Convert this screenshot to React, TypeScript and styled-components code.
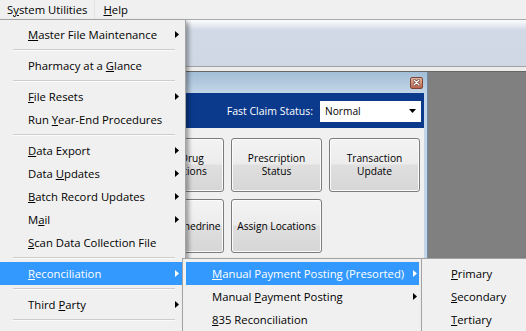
import React from "react";
import styled, { createGlobalStyle } from "styled-components";

const GlobalStyle = createGlobalStyle`
  * { box-sizing: border-box; }
  html, body { margin: 0; padding: 0; background: #f0f0f0; }
`;

const Page = styled.div`
  position: relative;
  width: 526px;
  height: 331px;
  overflow: hidden;
  background: #f0f0f0;
  font-family: "Open Sans", "Noto Sans", sans-serif;
  display: flex;
  flex-direction: column;
  color: #000;
`;

const MenuBar = styled.div`
  height: 19px;
  display: flex;
  align-items: stretch;
  font-size: 11.3px;
  line-height: 19px;
  background: #f0f0f0;
`;

const TopItem = styled.div<{ $open?: boolean }>`
  padding: 0 7px 0 ${(p) => (p.$open ? 7 : 8)}px;
  border-right: 1px solid ${(p) => (p.$open ? "#e2e2e2" : "transparent")};
  white-space: nowrap;
`;

const Toolbar = styled.div`
  height: 48px;
  border-top: 1px solid #a9a9a9;
  border-bottom: 1px solid #a2a2a2;
  background: linear-gradient(
    180deg,
    #fbfcfd 0px,
    #e4e9f0 6px,
    #d1d9e6 10px,
    #cfd7e4 100%
  );
`;

const Strip = styled.div`
  height: 4px;
  background: #ececec;
`;

const MdiArea = styled.div`
  flex: 1;
  display: flex;
  background: #808080;
  border-top: 1px solid #666;
`;

const ChildWindow = styled.div`
  margin-left: 100px;
  width: 328px;
  display: flex;
  flex-direction: column;
  background: #c3d5e6;
  border-right: 1px solid #6f8cab;
`;

const TitleBar = styled.div`
  height: 21px;
  display: flex;
  align-items: center;
  justify-content: flex-end;
  padding-right: 4px;
  background: linear-gradient(180deg, #a3bed7 0%, #b2c9de 50%, #c4d6e7 100%);
`;

const CloseBtn = styled.div`
  width: 13px;
  height: 12px;
  border: 1px solid #7a4736;
  border-radius: 2px;
  background: linear-gradient(180deg, #e6b6a6 0%, #cf8a74 50%, #b9634c 100%);
  display: flex;
  align-items: center;
  justify-content: center;
`;

const Body = styled.div`
  flex: 1;
  margin: 0 3px 0 4px;
  display: flex;
  flex-direction: column;
`;

const StatusBand = styled.div`
  height: 35px;
  background: #0b3a8d;
  display: flex;
  align-items: center;
  justify-content: flex-end;
  gap: 7px;
  padding: 1px 3px 0 0;
`;

const BandLabel = styled.span`
  color: #fff;
  font-size: 10.5px;
  white-space: nowrap;
`;

const Select = styled.div`
  width: 101px;
  height: 21px;
  background: #fff;
  display: flex;
  align-items: center;
  justify-content: space-between;
  padding: 0 5px 0 5px;
  font-size: 10.2px;
`;

const Content = styled.div`
  flex: 1;
  background: #f0f0f0;
  padding: 10px 4px 0 0;
  display: grid;
  grid-template-columns: repeat(3, 91px);
  grid-auto-rows: 54px;
  gap: 7px;
  justify-content: end;
  align-content: start;
`;

const ActionButton = styled.div`
  border: 1px solid #7c7c7c;
  border-radius: 3px;
  box-shadow: inset 0 0 0 1px #fbfbfb;
  background: linear-gradient(
    180deg,
    #f3f3f3 0%,
    #ececec 48%,
    #dfdfdf 50%,
    #d6d6d6 100%
  );
  display: flex;
  align-items: center;
  justify-content: center;
  text-align: center;
  font-size: 10.2px;
  line-height: 13px;
  white-space: pre;
  overflow: hidden;
`;

const Menu = styled.div<{ $left: number; $top: number; $width: number }>`
  position: absolute;
  left: ${(p) => p.$left}px;
  top: ${(p) => p.$top}px;
  width: ${(p) => p.$width}px;
  background: #f0f0f0;
  border: 1px solid #a3a3a3;
  padding: 3px 2px 3px 3px;
  box-shadow: 3px 3px 4px rgba(0, 0, 0, 0.33);
  font-size: 11.3px;
`;

const MenuItem = styled.div<{ $active?: boolean; $arrowPad: number }>`
  height: 23px;
  display: flex;
  align-items: center;
  padding: 0 ${(p) => p.$arrowPad}px 0 26px;
  background: ${(p) => (p.$active ? "#3399ff" : "transparent")};
  color: ${(p) => (p.$active ? "#fff" : "#000")};
  white-space: nowrap;
  line-height: 23px;
`;

const MainItem = styled(MenuItem)`
  padding-left: 28px;
`;

const ItemLabel = styled.span`
  flex: 1;
`;

const Separator = styled.div`
  height: 8px;
  padding-top: 3px;
  margin: 0 8px 0 13px;
  &::before {
    content: "";
    display: block;
    height: 1px;
    background: #cdcdcd;
    box-shadow: 0 1px 0 #fbfbfb;
  }
`;

const Arrow = () => (
  <svg width="4" height="7" viewBox="0 0 4 7">
    <path d="M0 0 L4 3.5 L0 7 Z" fill="currentColor" />
  </svg>
);

const DownArrow = () => (
  <svg width="7" height="4" viewBox="0 0 7 4">
    <path d="M0 0 L7 0 L3.5 4 Z" fill="#000" />
  </svg>
);

const CloseGlyph = () => (
  <svg width="7" height="7" viewBox="0 0 7 7">
    <path d="M1 1 L6 6 M6 1 L1 6" stroke="#5a2a1c" strokeWidth="2.6" strokeLinecap="round" />
    <path d="M1 1 L6 6 M6 1 L1 6" stroke="#fff" strokeWidth="1.4" strokeLinecap="round" />
  </svg>
);

type Entry =
  | { sep: true }
  | { label: React.ReactNode; sub?: boolean; active?: boolean };

const mainEntries: Entry[] = [
  { label: <><u>M</u>aster File Maintenance</>, sub: true },
  { sep: true },
  { label: <>Pharmacy at a <u>G</u>lance</> },
  { sep: true },
  { label: <><u>F</u>ile Resets</>, sub: true },
  { label: <>Run <u>Y</u>ear-End Procedures</> },
  { sep: true },
  { label: <><u>D</u>ata Export</>, sub: true },
  { label: <>Data <u>U</u>pdates</>, sub: true },
  { label: <><u>B</u>atch Record Updates</>, sub: true },
  { label: <>M<u>a</u>il</>, sub: true },
  { label: <><u>S</u>can Data Collection File</> },
  { sep: true },
  { label: <><u>R</u>econciliation</>, sub: true, active: true },
  { sep: true },
  { label: <>Third <u>P</u>arty</>, sub: true },
  { sep: true },
  { label: null, sub: true },
];

const reconEntries: Entry[] = [
  { label: <><u>M</u>anual Payment Posting (Presorted)</>, sub: true, active: true },
  { label: <>Manual <u>P</u>ayment Posting</>, sub: true },
  { label: <><u>8</u>35 Reconciliation</> },
];

const presortEntries: Entry[] = [
  { label: <><u>P</u>rimary</> },
  { label: <><u>S</u>econdary</> },
  { label: <><u>T</u>ertiary</> },
];

const buttons = [
  "Multi-Drug\nInteractions",
  "Prescription\nStatus",
  "Transaction\nUpdate",
  "Pseudoephedrine",
  "Assign Locations",
];

export default function App() {
  return (
    <Page>
      <GlobalStyle />
      <MenuBar>
        <TopItem $open>
          S<u>y</u>stem Utilities
        </TopItem>
        <TopItem>
          <u>H</u>elp
        </TopItem>
      </MenuBar>
      <Toolbar />
      <Strip />
      <MdiArea>
        <ChildWindow>
          <TitleBar>
            <CloseBtn>
              <CloseGlyph />
            </CloseBtn>
          </TitleBar>
          <Body>
            <StatusBand>
              <BandLabel>Fast Claim Status:</BandLabel>
              <Select>
                <span>Normal</span>
                <DownArrow />
              </Select>
            </StatusBand>
            <Content>
              {buttons.map((b) => (
                <ActionButton key={b}>{b}</ActionButton>
              ))}
            </Content>
          </Body>
        </ChildWindow>
      </MdiArea>

      <Menu $left={-4} $top={19} $width={190}>
        {mainEntries.map((e, i) =>
          "sep" in e ? (
            <Separator key={i} />
          ) : (
            <MainItem key={i} $active={e.active} $arrowPad={4}>
              <ItemLabel>{e.label}</ItemLabel>
              {e.sub && <Arrow />}
            </MainItem>
          )
        )}
      </Menu>

      <Menu $left={182} $top={258} $width={240}>
        {reconEntries.map((e, i) =>
          "sep" in e ? (
            <Separator key={i} />
          ) : (
            <MenuItem key={i} $active={e.active} $arrowPad={2}>
              <ItemLabel>{e.label}</ItemLabel>
              {e.sub && <Arrow />}
            </MenuItem>
          )
        )}
      </Menu>

      <Menu $left={421} $top={258} $width={130}>
        {presortEntries.map((e, i) =>
          "sep" in e ? (
            <Separator key={i} />
          ) : (
            <MenuItem key={i} $arrowPad={4}>
              <ItemLabel>{e.label}</ItemLabel>
            </MenuItem>
          )
        )}
      </Menu>
    </Page>
  );
}
